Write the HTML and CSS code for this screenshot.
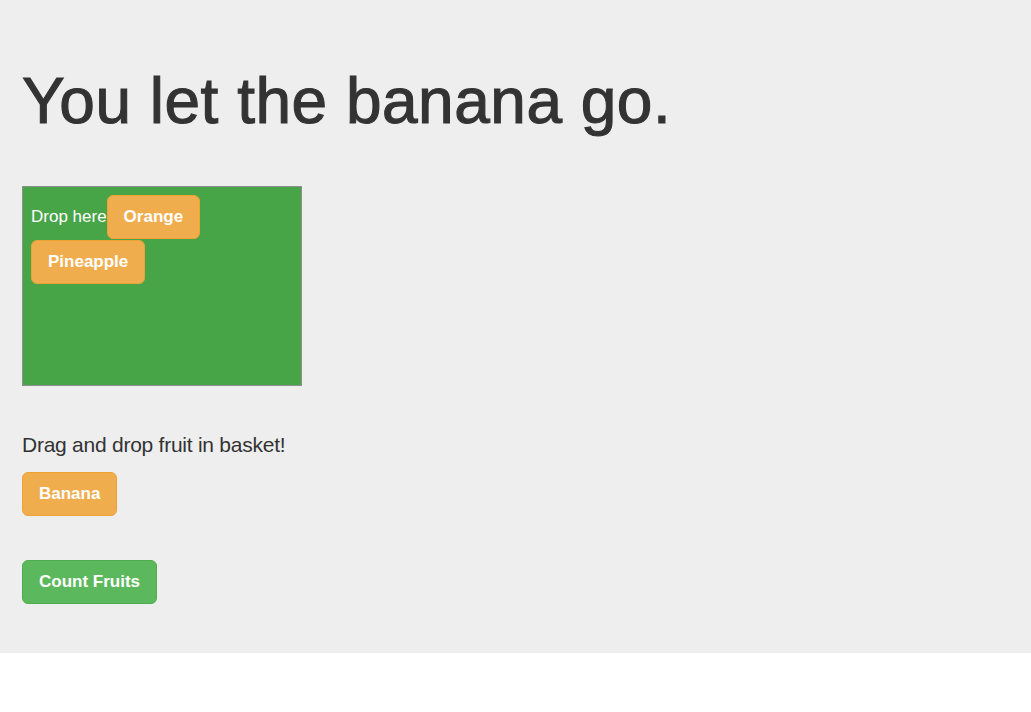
FILE: index.html
```html
<!DOCTYPE html>
<html>
<head>
<meta charset="utf-8">
<title>Fruit basket</title>
<link rel="stylesheet" href="styles.css">
</head>
<body>
  <div class="jumbotron">
    <h1 class="title">You let the banana go.</h1>
    <div class="basket">
      <span class="basket-label">Drop here</span>
      <div class="btn btn-fruit">Orange</div>
      <div class="btn btn-fruit">Pineapple</div>
    </div>
    <p class="lead">Drag and drop fruit in basket!</p>
    <div class="fruits">
      <div class="btn btn-fruit">Banana</div>
    </div>
    <div class="actions">
      <button class="btn btn-count" type="button">Count Fruits</button>
    </div>
  </div>
</body>
</html>
```
FILE: styles.css
```css
html, body {
  margin: 0;
  padding: 0;
  background: #fff;
}

body {
  font-family: "Liberation Sans", Arial, Helvetica, sans-serif;
  color: #333;
  font-size: 17px;
}

.jumbotron {
  background: #eeeeee;
  padding: 66px 22px 49px;
}

.title {
  margin: 0;
  font-size: 64px;
  line-height: 70px;
  font-weight: 400;
  letter-spacing: 0.5px;
  color: #333;
  -webkit-text-stroke: 1.1px #333;
}

.basket {
  margin-top: 50px;
  width: 262px;
  height: 182px;
  padding: 8px;
  border: 1px solid #8f8f8f;
  background: #47a447;
  color: #fff;
  display: flex;
  flex-wrap: wrap;
  align-items: baseline;
  align-content: flex-start;
  row-gap: 1px;
}

.basket-label {
  font-size: 17px;
}

.lead {
  margin: 44px 0 0;
  font-size: 21px;
  line-height: 30px;
  letter-spacing: -0.25px;
  color: #333;
}

.fruits {
  margin-top: 12px;
  display: flex;
}

.actions {
  margin-top: 44px;
  display: flex;
}

.btn {
  display: inline-block;
  box-sizing: border-box;
  height: 44px;
  padding: 10px 16px;
  border: 1px solid transparent;
  border-radius: 6px;
  font-family: "Liberation Sans", Arial, Helvetica, sans-serif;
  font-size: 17px;
  font-weight: 700;
  line-height: 22px;
  color: #fff;
  white-space: nowrap;
  cursor: pointer;
}

.btn-fruit {
  background: #f0ad4e;
  border-color: #eea236;
}

.btn-count {
  background: #5cb85c;
  border-color: #4cae4c;
}
```
